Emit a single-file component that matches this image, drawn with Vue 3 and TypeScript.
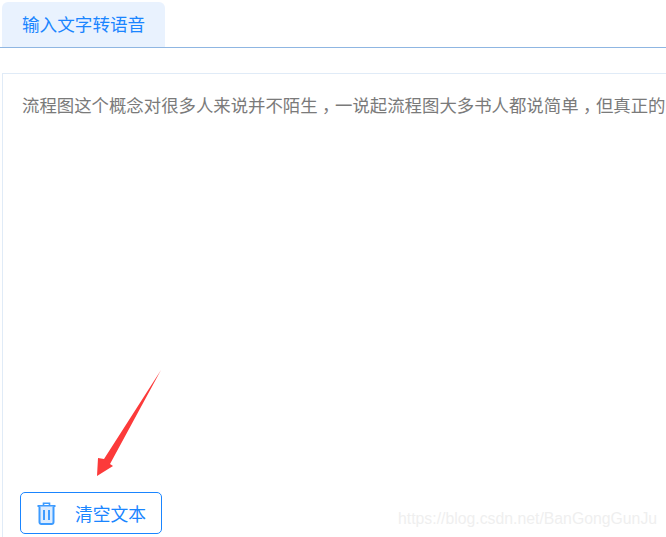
<script setup lang="ts">
const tabLabel: string = '输入文字转语音'
const bodyParts: string[] = ['流程图这个概念对很多人来说并不陌生', '一说起流程图大多书人都说简单', '但真正的']
const buttonLabel: string = '清空文本'
const watermark: string = 'https://blog.csdn.net/BanGongGunJu'
</script>

<template>
  <div class="page">
    <div class="tabs">
      <div class="tab">{{ tabLabel }}</div>
    </div>
    <div class="panel">
      <p class="body-text">
        <template v-for="(part, i) in bodyParts" :key="i"><span>{{ part }}</span><span v-if="i < bodyParts.length - 1" class="comma">，</span></template>
      </p>
      <button class="clear" type="button">
        <svg class="trash" viewBox="0 0 19 23" width="19" height="23" aria-hidden="true">
          <path d="M6.500 3.500V1.200h6v2.300" fill="none" stroke="#3d9bff" stroke-width="1.6" />
          <path d="M0.500 4h18" fill="none" stroke="#3d9bff" stroke-width="2" />
          <path d="M2.500 4.500v15.700a1.800 1.800 0 0 0 1.800 1.800h10.400a1.800 1.800 0 0 0 1.800-1.800V4.500" fill="#dcecff" stroke="#3d9bff" stroke-width="2" />
          <path d="M7 8v10M12 8v10" fill="none" stroke="#3d9bff" stroke-width="2" />
        </svg>
        <span class="clear-label">{{ buttonLabel }}</span>
      </button>
    </div>
    <svg class="arrow" viewBox="0 0 666 537" width="666" height="537" aria-hidden="true">
      <path d="M161 370L110 464L113 466L97 476L98 458L104 459Z" fill="#fc3a3a" />
    </svg>
    <span class="watermark">{{ watermark }}</span>
  </div>
</template>

<style scoped>
.page {
  position: relative;
  width: 666px;
  height: 537px;
  display: flex;
  flex-direction: column;
  overflow: hidden;
  background: #fff;
  font-family: "Noto Sans CJK SC", "Liberation Sans", sans-serif;
}
.tabs {
  flex: none;
  height: 48px;
  box-sizing: border-box;
  padding: 2px 0 0 2px;
  border-bottom: 1px solid #8fb6e2;
  display: flex;
}
.tab {
  width: 163px;
  box-sizing: border-box;
  padding: 0 0 2px 20px;
  display: flex;
  align-items: center;
  font-size: 17.6px;
  color: #1a85ff;
  background: #e9f2fe;
  border-radius: 6px 6px 0 0;
}
.panel {
  flex: 1;
  min-height: 0;
  margin: 25px 0 0 2px;
  box-sizing: border-box;
  padding: 18px 0 3px 17px;
  border-top: 1px solid #e0ebf7;
  border-left: 1px solid #e0ebf7;
  display: flex;
  flex-direction: column;
}
.body-text {
  margin: 0;
  padding-left: 2px;
  font-size: 17.4px;
  line-height: 26px;
  color: #7a7a7a;
  white-space: nowrap;
}
.comma {
  display: inline-block;
  width: 1em;
  text-align: center;
  font-feature-settings: "halt";
}
.clear {
  margin-top: auto;
  width: 142px;
  height: 42px;
  box-sizing: border-box;
  padding: 0 0 0 16px;
  display: flex;
  align-items: center;
  background: #fff;
  border: 1px solid #1a85ff;
  border-radius: 5px;
  font-family: inherit;
  color: #1a85ff;
}
.trash {
  flex: none;
}
.clear-label {
  margin-left: 19px;
  font-size: 17.8px;
}
.arrow {
  position: absolute;
  left: 0;
  top: 0;
  pointer-events: none;
}
.watermark {
  position: absolute;
  left: 398px;
  top: 510px;
  font-family: "Liberation Sans", Arial, sans-serif;
  font-size: 15.8px;
  line-height: 18px;
  color: #efefef;
  white-space: nowrap;
}
</style>
